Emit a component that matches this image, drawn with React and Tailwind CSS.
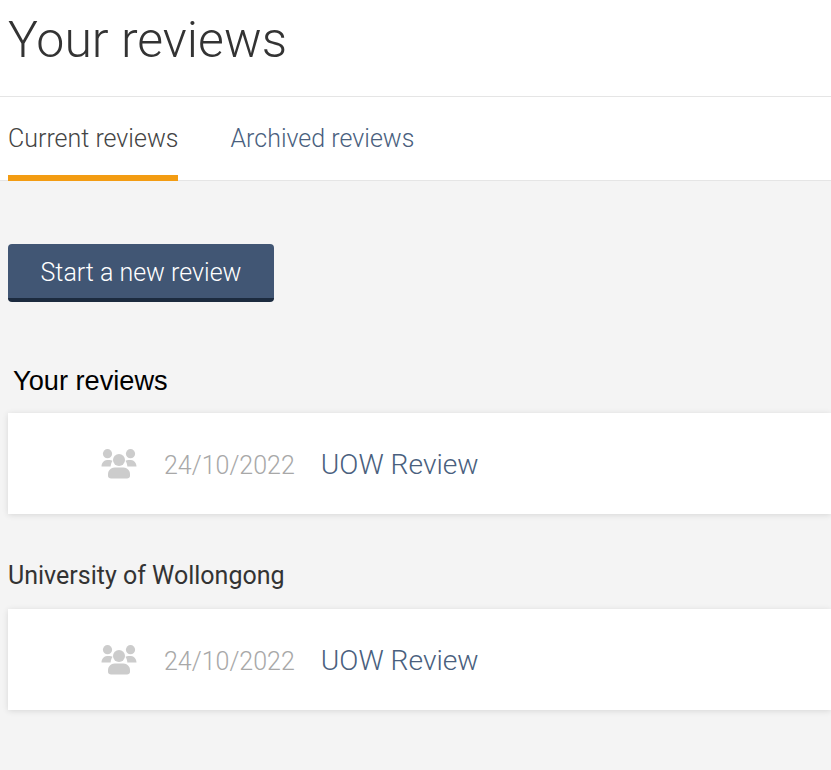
import React from 'react';

const UsersIcon = () => (
  <svg viewBox="0 0 36 30" className="h-[30px] w-[36px] shrink-0 fill-[#cccccc]">
    <circle cx="6.5" cy="4.7" r="4.6" />
    <circle cx="29.5" cy="4.7" r="4.6" />
    <circle cx="18" cy="11" r="6" />
    <path d="M0.5 17.5C0.5 14 3 11 6 11H8.5C9.6 11 10.6 11.3 11.5 11.8C10.4 13.4 9.8 15.4 9.6 17.5Z" />
    <path d="M35.5 17.5C35.5 14 33 11 30 11H27.5C26.4 11 25.4 11.3 24.5 11.8C25.6 13.4 26.2 15.4 26.4 17.5Z" />
    <path d="M7 27V25C7 21.5 10 18.5 13.5 18.5H22.5C26 18.5 29 21.5 29 25V27C29 28.6 27.6 29.5 26 29.5H10C8.4 29.5 7 28.6 7 27Z" />
  </svg>
);

const ReviewCard = ({ date, title }) => (
  <div className="flex h-[101px] items-center bg-white pl-[93px] shadow-[0_1px_6px_rgba(0,0,0,0.12)]">
    <UsersIcon />
    <span className="ml-[27px] pt-[5px] text-[25px] font-light text-[#a8a8a8]">{date}</span>
    <span className="ml-[26px] pt-[3px] text-[28.2px] font-light text-[#4a5f7e]">{title}</span>
  </div>
);

const App = () => (
  <div className="h-[770px] w-[831px] overflow-hidden bg-[#f4f4f4] font-['Roboto',sans-serif]">
    <header className="h-[97px] border-b border-[#e5e5e5] bg-white pl-2">
      <h1 className="pt-[10px] text-[50px] leading-[60px] font-light text-[#333333]">Your reviews</h1>
    </header>

    <nav className="flex h-[84px] gap-[52px] border-b border-[#e5e5e5] bg-white pl-2">
      <div className="h-[84px] border-b-[6px] border-[#f39c12] pt-[25px] text-[25px] leading-[34px] font-light text-[#444444]">
        Current reviews
      </div>
      <div className="pt-[25px] text-[25px] leading-[34px] font-light text-[#4a5f7e]">Archived reviews</div>
    </nav>

    <main className="pt-[63px] pl-2">
      <button className="h-[58px] w-[266px] rounded-[4px] border-b-4 border-[#1c2b3f] bg-[#415674] pt-[3px] text-[25px] font-light text-white">
        Start a new review
      </button>

      <h2 className="mt-[61px] pl-[5px] font-['Liberation_Sans',sans-serif] text-[27.2px] leading-[36px] text-black">
        Your reviews
      </h2>
      <div className="mt-[14px]">
        <ReviewCard date="24/10/2022" title="UOW Review" />
      </div>

      <h2 className="mt-[44px] text-[25px] leading-[36px] text-[#333333]">University of Wollongong</h2>
      <div className="mt-[15px]">
        <ReviewCard date="24/10/2022" title="UOW Review" />
      </div>
    </main>
  </div>
);

export default App;
